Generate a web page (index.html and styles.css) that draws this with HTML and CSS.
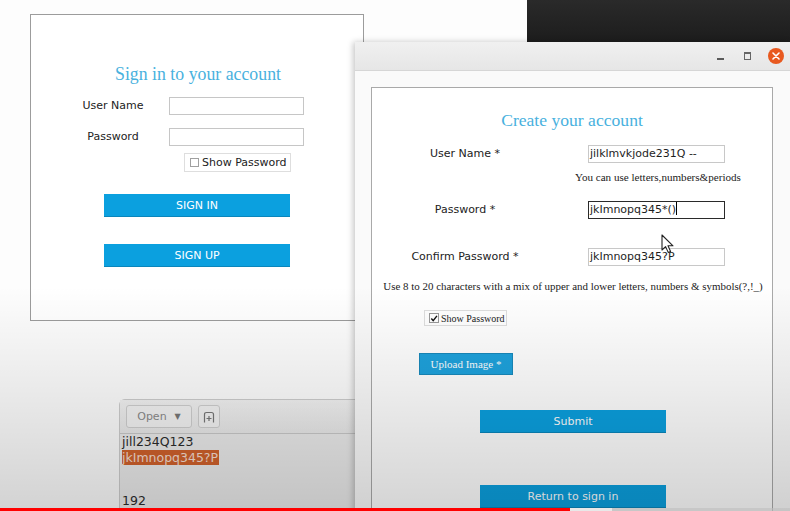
FILE: index.html
```html
<!DOCTYPE html>
<html lang="en">
<head>
<meta charset="utf-8">
<title>Create your account</title>
<link rel="stylesheet" href="styles.css">
</head>
<body>
<div class="desktop">
  <div class="dark-win"></div>

  <section class="signin">
    <h1 class="title">Sign in to your account</h1>
    <div class="signin-form">
      <span class="lbl">User Name</span><div class="field"></div>
      <span class="lbl">Password</span><div class="field"></div>
    </div>
    <div class="check-box sans-check"><span class="cb"></span>Show Password</div>
    <div class="signin-btns">
      <div class="btn">SIGN IN</div>
      <div class="btn">SIGN UP</div>
    </div>
  </section>

  <section class="editor">
    <div class="ed-toolbar">
      <div class="ed-btn ed-open">Open <span class="caret">▼</span></div>
      <div class="ed-btn ed-icon">
        <svg width="12" height="12" viewBox="0 0 12 12"><path d="M1.5 11.5V3.5Q1.5 1.5 3.5 1.5H8.5Q10.5 1.5 10.5 3.5V11.5" fill="none" stroke="#777" stroke-width="1.2"/><path d="M6 5v5M3.5 7.5h5" stroke="#777" stroke-width="1.2"/></svg>
      </div>
    </div>
    <div class="ed-text">
      <div class="ed-line">jill234Q123</div>
      <div class="ed-line"><span class="sel">jkImnopq345?P</span></div>
      <div class="ed-line ed-last">192</div>
    </div>
  </section>

  <section class="create">
    <header class="titlebar">
      <span class="tb-min"></span>
      <span class="tb-max"></span>
      <span class="tb-close">
        <svg width="8" height="8" viewBox="0 0 8 8"><path d="M1 1L7 7M7 1L1 7" stroke="#fff" stroke-width="1.6" stroke-linecap="round"/></svg>
      </span>
    </header>
    <div class="create-body">
      <div class="panel">
        <h2 class="title">Create your account</h2>
        <div class="row row-un">
          <span class="clbl">User Name *</span>
          <div class="cfield">jilklmvkjode231Q --</div>
        </div>
        <div class="hint">You can use letters,numbers&amp;periods</div>
        <div class="row row-pw">
          <span class="clbl">Password *</span>
          <div class="cfield focus">jkImnopq345*()<span class="text-caret"></span></div>
        </div>
        <div class="row row-cf">
          <span class="clbl">Confirm Password *</span>
          <div class="cfield">jkImnopq345?P</div>
        </div>
        <div class="rules">Use 8 to 20 characters with a mix of upper and lower letters, numbers &amp; symbols(?,!_)</div>
        <div class="check-box serif-check"><span class="cb checked">
          <svg width="9" height="9" viewBox="0 0 9 9"><path d="M1.5 4.5L3.6 7L7.8 1.5" fill="none" stroke="#111" stroke-width="1.6"/></svg>
        </span>Show Password</div>
        <div class="upload">Upload Image *</div>
        <div class="btn wide submit">Submit</div>
        <div class="btn wide back">Return to sign in</div>
      </div>
    </div>
  </section>

  <svg class="pointer" width="14" height="20" viewBox="0 0 14 20"><path d="M1 1V16L4.6 12.6L7.2 18.4L9.6 17.4L7 11.8H12Z" fill="#fff" stroke="#222" stroke-width="1.1" stroke-linejoin="round"/></svg>

  <div class="vignette"></div>
  <div class="progress"><span class="played"></span><span class="buffered"></span></div>
</div>
</body>
</html>
```
FILE: styles.css
```css
* { box-sizing: border-box; margin: 0; padding: 0; }
html, body { width: 790px; height: 511px; overflow: hidden; }
body { background: #fff; font-family: "DejaVu Sans", sans-serif; color: #222; }

.desktop { position: relative; width: 790px; height: 511px; overflow: hidden; background: #fdfdfd; }

.dark-win {
  position: absolute; left: 527px; top: 0; width: 263px; height: 44px;
  background: linear-gradient(#2a2a2a, #1c1c1c);
}

/* ---------- sign in window ---------- */
.signin {
  position: absolute; left: 30px; top: 14px; width: 334px; height: 307px;
  border: 1px solid #9c9c9c; background: #fff;
  padding-top: 49px;
  display: flex; flex-direction: column;
}
.title {
  font-family: "Liberation Serif", "Times New Roman", serif;
  font-weight: normal; font-size: 18px; line-height: 20px;
  color: #48b1de; text-align: center;
}
.signin .title { padding-left: 2px; font-size: 17.8px; }
.signin-form {
  margin-top: 13px; padding-left: 47px;
  display: grid; grid-template-columns: 70px 135px;
  column-gap: 21px; row-gap: 13px; align-items: center;
}
.lbl { font-size: 11px; text-align: center; color: #222; line-height: 14px; }
.field { height: 18px; border: 1px solid #c6c6c6; background: #fff; }

.check-box {
  display: flex; align-items: center; background: #fff;
  border: 1px solid #dedede;
}
.sans-check {
  margin: 7px 0 0 153px; width: 107px; height: 19px;
  font-size: 11px; color: #222; padding-left: 5px; gap: 3px;
}
.cb {
  width: 9px; height: 9px; border: 1px solid #a0a0a0; background: #fff;
  display: inline-flex; align-items: center; justify-content: center;
}
.signin-btns { margin: 22px 0 0 73px; display: flex; flex-direction: column; gap: 27px; }
.btn {
  width: 186px; height: 23px; background: #0ba0df;
  color: #fff; font-size: 11px; line-height: 23px; text-align: center;
  border-bottom: 1px solid #0a86bb;
}

/* ---------- editor ---------- */
.editor {
  position: absolute; left: 119px; top: 399px; width: 250px; height: 120px;
  background: #ededed; border: 1px solid #cdcdcd; border-top-left-radius: 6px;
}
.ed-toolbar {
  height: 34px; border-bottom: 1px solid #c9c9c9;
  display: flex; align-items: flex-start; gap: 6px; padding: 5px 0 0 6px;
  background: linear-gradient(#f2f2f2, #e9e9e9);
}
.ed-btn {
  height: 23px; border: 1px solid #cfcfcf; border-radius: 3px;
  background: #f3f3f3; display: flex; align-items: center; justify-content: center;
}
.ed-open { width: 66px; font-size: 11px; color: #8a8a8a; gap: 8px; }
.caret { font-size: 8px; color: #777; }
.ed-icon { width: 22px; }
.ed-text { padding: 0 0 0 2px; font-size: 12.5px; color: #2b2b2b; background: #ebebeb; height: 90px; }
.ed-line { height: 16px; line-height: 16px; }
.sel { background: #d0612b; color: #f6ddd0; padding: 0 1px 0 0; }
.ed-last { margin-top: 27px; }

/* ---------- create window ---------- */
.create {
  position: absolute; left: 355px; top: 42px; width: 435px; height: 480px;
  background: #fafafa; box-shadow: -2px 0 6px rgba(0,0,0,0.22);
  display: flex; flex-direction: column;
}
.titlebar {
  height: 29px; flex: none;
  background: linear-gradient(#f0f0f0, #e6e6e6);
  border-bottom: 1px solid #d6d6d6;
  display: flex; align-items: center; justify-content: flex-end;
  padding-right: 6px;
}
.tb-min { width: 7px; height: 2px; background: #5a5a5a; margin-top: 5px; }
.tb-max { width: 7px; height: 8px; border: 1px solid #666; border-top-width: 2px; margin-left: 20px; }
.tb-close {
  width: 16px; height: 16px; border-radius: 50%; background: #e8591f;
  display: flex; align-items: center; justify-content: center; margin-left: 17px;
}
.create-body { flex: 1; padding: 16px 17px 0 16px; }
.panel {
  height: 100%; border: 1px solid #a9a9a9; border-bottom: none; background: #fff;
  padding-top: 22px; display: flex; flex-direction: column;
}
.panel .title { font-size: 17.6px; }
.row { display: flex; align-items: center; }
.row-un { margin-top: 15px; }
.clbl { width: 186px; text-align: center; font-size: 11px; color: #222; line-height: 14px; }
.cfield {
  margin-left: 30px; width: 137px; height: 18px; border: 1px solid #c8c8c8; background: #fff;
  font-size: 11px; line-height: 16px; padding-left: 1px; color: #1e1e1e; white-space: nowrap;
}
.cfield.focus { border-color: #2a2a2a; }
.text-caret { display: inline-block; width: 1px; height: 13px; background: #000; vertical-align: -2px; }
.hint {
  margin-top: 8px; padding-left: 203px; height: 12px; line-height: 12px;
  font-family: "Liberation Serif", "Times New Roman", serif; font-size: 11.1px; color: #222;
  white-space: nowrap;
}
.row-pw { margin-top: 18px; }
.row-cf { margin-top: 29px; }
.rules {
  margin-top: 14px; height: 12px; line-height: 12px; text-align: center; padding-left: 2px;
  font-family: "Liberation Serif", "Times New Roman", serif; font-size: 10.95px; color: #222;
  white-space: nowrap;
}
.serif-check {
  margin: 18px 0 0 52px; width: 83px; height: 16px; padding-left: 4px; gap: 2px;
  font-family: "Liberation Serif", "Times New Roman", serif; font-size: 10px; color: #222;
}
.serif-check .cb { width: 10px; height: 10px; border-color: #999; }
.upload {
  margin: 27px 0 0 47px; width: 94px; height: 22px;
  background: #1ea2dc; border: 1px solid #1889bb;
  color: #fff; text-align: center; line-height: 20px;
  font-family: "Liberation Serif", "Times New Roman", serif; font-size: 11px;
}
.btn.wide { width: 186px; margin-left: 108px; }
.submit { margin-top: 35px; }
.back { margin-top: 52px; }

.pointer { position: absolute; left: 661px; top: 234px; }

.vignette {
  position: absolute; inset: 0; pointer-events: none;
  background: linear-gradient(to bottom, rgba(0,0,0,0) 0%, rgba(0,0,0,0) 56%, rgba(0,0,0,0.07) 75%, rgba(0,0,0,0.17) 100%);
}
.progress { position: absolute; left: 0; bottom: 0; width: 790px; height: 3px; display: flex; background: rgba(190,190,190,0.6); }
.played { width: 570px; background: #f00; }
.buffered { width: 42px; background: rgba(240,240,240,0.8); }
```
